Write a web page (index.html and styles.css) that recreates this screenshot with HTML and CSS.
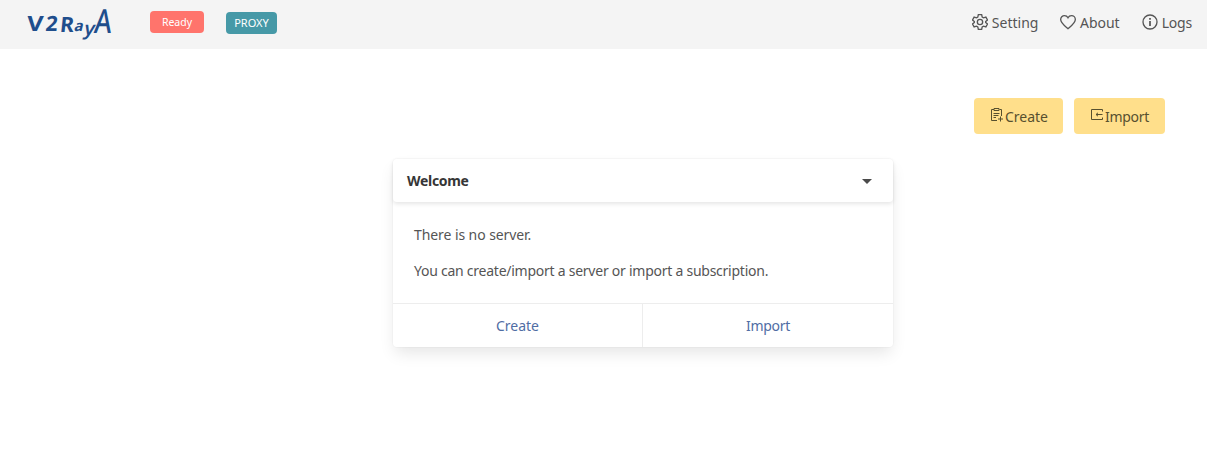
FILE: index.html
```html
<!DOCTYPE html>
<html lang="en">
<head>
    <meta charset="UTF-8">
    <meta name="viewport" content="width=device-width, initial-scale=1.0">
    <title>V2RayA</title>
    <link rel="stylesheet" href="styles.css">
</head>
<body>

    <nav class="navbar">
        <a class="logo" href="#">
            <svg width="90" height="40" viewBox="0 0 90 40">
                <text class="heavy" font-size="21" transform="translate(1.5 27) skewX(-4) scale(1.2 1)">V</text>
                <text class="heavy" font-size="21" transform="translate(20 27) skewX(-6)">2</text>
                <text class="heavy" font-size="21" transform="translate(34.5 27.5) skewX(-6)">R</text>
                <text class="heavy" font-size="15" transform="translate(48.500 27) skewX(-14)">a</text>
                <text class="heavy thin" font-size="19" transform="translate(58 30.5) skewX(-14)">y</text>
                <text class="light" font-size="33" transform="translate(68.500 28.500) skewX(-6) scale(.8 1)">A</text>
            </svg>
        </a>
        <span class="tag ready">Ready</span>
        <span class="tag proxy">PROXY</span>

        <div class="menu">
            <a class="menu-item" href="#">
                <svg class="icon" width="16" height="16" viewBox="0 0 24 24">
                    <path d="M9.5 1h5l.8 3.6 2 1.2 3.5-1.1 2.4 4.3-2.7 2.4v1.2l2.7 2.4-2.4 4.3-3.5-1.1-2 1.2-.8 3.6h-5l-.8-3.6-2-1.2-3.5 1.1L.8 15l2.7-2.4v-1.2L.8 9l2.4-4.3 3.5 1.1 2-1.2z"/>
                    <circle cx="12" cy="12" r="4"/>
                </svg>
                <span>Setting</span>
            </a>
            <a class="menu-item" href="#">
                <svg class="icon" width="16" height="16" viewBox="0 0 24 24">
                    <path d="M12 22C7.5 18.2 1 13.6 1 8.3 1 4.9 3.6 2.5 6.700 2.5c2.200 0 4.200 1.200 5.300 3.200 1.100-2 3.100-3.200 5.300-3.200C20.400 2.5 23 4.900 23 8.300c0 5.300-6.500 9.900-11 13.700z"/>
                </svg>
                <span>About</span>
            </a>
            <a class="menu-item logs" href="#">
                <svg class="icon" width="16" height="16" viewBox="0 0 24 24">
                    <circle cx="12" cy="12" r="10.5"/>
                    <path class="stem" d="M12 10.5V18M12 6v2.800"/>
                </svg>
                <span>Logs</span>
            </a>
        </div>
    </nav>

    <div class="toolbar">
        <button class="button create">
            <svg class="icon small" width="14" height="14" viewBox="0 0 14 14">
                <path d="M4 1.5H1.5v11H7M9.5 1.5h2V8M4 .5h5v2H4zM3.5 5.5h6M3.5 7.5h5M3.5 9.5H6M10.5 8.5v5M8 11h5"/>
            </svg>
            <span>Create</span>
        </button>
        <button class="button import">
            <svg class="icon small" width="14" height="14" viewBox="0 0 14 14">
                <path d="M12.5 3.5v-2h-11v10h11v-2M12.5 6.500H6M8 4.800 6 6.500l2 1.700"/>
            </svg>
            <span>Import</span>
        </button>
    </div>

    <div class="card">
        <div class="card-header">
            <p class="card-title">Welcome</p>
            <svg class="caret" width="10" height="5" viewBox="0 0 10 5"><path d="M0 0h10L5 5z"/></svg>
        </div>
        <div class="card-content">
            <p>There is no server.</p>
            <p>You can create/import a server or import a subscription.</p>
        </div>
        <div class="card-footer">
            <a href="#">Create</a>
            <a class="import" href="#">Import</a>
        </div>
    </div>

</body>
</html>
```
FILE: styles.css
```css
* {
    box-sizing: border-box;
}

body {
    min-height: 100vh;
    margin: 0;
    background-color: #fff;
    color: #555;
    font-family: "Noto Sans", sans-serif;
    font-size: 14px;
    line-height: 21px;
}

a {
    color: inherit;
    text-decoration: none;
}

p {
    margin: 0;
}

.navbar {
    display: flex;
    align-items: flex-start;
    height: 49px;
    background-color: #f4f4f4;
}

.logo {
    width: 90px;
    height: 40px;
    margin: 4px 35px 0 25px;
}

.logo svg {
    display: block;
    overflow: visible;
}

.heavy,
.light {
    fill: #1f4e8c;
    font-family: "Noto Sans", sans-serif;
    font-weight: bold;
}

.thin {
    font-weight: 600;
}

.light {
    font-weight: 500;
}

.tag {
    height: 22px;
    border-radius: 4px;
    color: #fff;
    font-size: 10.5px;
    line-height: 22px;
    text-align: center;
}

.ready {
    width: 54px;
    margin-top: 11px;
    background-color: #ff746c;
}

.proxy {
    width: 51px;
    margin: 12px 0 0 22px;
    background-color: #4699a7;
    font-size: 11px;
}

.menu {
    display: flex;
    gap: 22px;
    margin: 12px 15px 0 auto;
}

.menu-item {
    display: flex;
    gap: 3.5px;
}

.logs {
    gap: 4px;
    letter-spacing: -0.2px;
}

.icon {
    flex: none;
    margin-top: 2px;
    fill: none;
    stroke: currentColor;
    stroke-width: 2;
}

.stem {
    stroke-width: 2.6;
}

.small {
    stroke-width: 1;
}

.toolbar {
    display: flex;
    justify-content: flex-end;
    gap: 11px;
    padding: 49px 42px 0 0;
}

.button {
    display: flex;
    justify-content: center;
    gap: 1px;
    width: 89px;
    height: 36px;
    padding: 8px 0 0;
    border: none;
    border-radius: 4px;
    background-color: #ffdf8b;
    color: #57502f;
    font: inherit;
    cursor: pointer;
}

.button.create {
    padding-left: 1px;
}

.button.import {
    width: 91px;
}

.import {
    letter-spacing: -0.3px;
}

.card {
    width: 500px;
    margin: 25px 0 0 393px;
    border-radius: 4px;
    box-shadow: 0 8px 16px -2px rgba(10, 10, 10, 0.1), 0 0 0 1px rgba(10, 10, 10, 0.02);
}

.card-header {
    display: flex;
    align-items: center;
    justify-content: space-between;
    height: 43px;
    padding: 0 21px 0 14px;
    border-radius: 4px;
    box-shadow: 0 2px 4px rgba(10, 10, 10, 0.1);
}

.card-title {
    color: #363636;
    font-weight: bold;
    letter-spacing: -0.3px;
}

.caret {
    margin-top: 2px;
    fill: #4a4a4a;
}

.card-content {
    height: 101px;
    padding: 22px 21px 0;
    letter-spacing: -0.08px;
}

.card-content p + p {
    margin-top: 15px;
    letter-spacing: -0.25px;
}

.card-footer {
    display: flex;
    height: 44px;
    border-top: 1px solid #ededed;
}

.card-footer a {
    width: 250px;
    padding-top: 11px;
    color: #506da4;
    text-align: center;
}

.card-footer a:first-child {
    border-right: 1px solid #ededed;
}
```
